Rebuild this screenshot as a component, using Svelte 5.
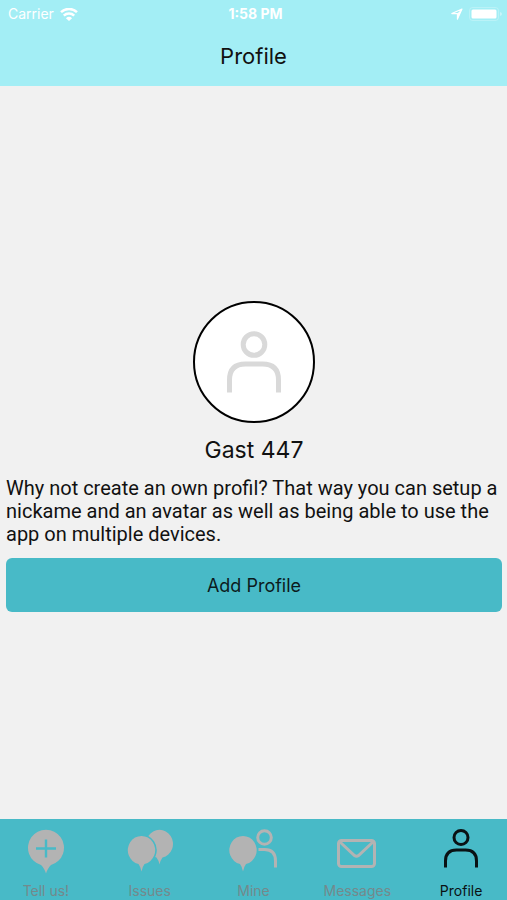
<script>
  const tabs = [
    { id: 'tell', label: 'Tell us!' },
    { id: 'issues', label: 'Issues' },
    { id: 'mine', label: 'Mine' },
    { id: 'messages', label: 'Messages' },
    { id: 'profile', label: 'Profile' }
  ];
  let active = $state('profile');
</script>

<div class="screen">
  <header>
    <div class="status">
      <div class="carrier">
        <span>Carrier</span>
        <svg width="18" height="13" viewBox="0 0 18 13" aria-hidden="true">
          <path d="M1 4.2a11.5 11.5 0 0 1 16 0M3.8 7.6a7.5 7.5 0 0 1 10.4 0" fill="none" stroke="#fff" stroke-width="2.5" />
          <path d="M9 13 5.9 10.2a4.5 4.5 0 0 1 6.2 0z" fill="#fff" />
        </svg>
      </div>
      <span class="time">1:58 PM</span>
      <div class="indicators">
        <svg width="12" height="12" viewBox="0 0 12 12" aria-hidden="true">
          <path d="M.8 5.6 11 1 6.4 11.2V5.6z" fill="none" stroke="#fff" stroke-width="1.1" stroke-linejoin="round" />
          <path d="M6.4 5.6 11 1 6.4 11.2z" fill="#fff" />
        </svg>
        <svg width="34" height="14" viewBox="0 0 34 14" aria-hidden="true">
          <rect x=".5" y=".5" width="29" height="13" rx="3" fill="none" stroke="#fff" stroke-opacity=".25" />
          <rect x="2.5" y="2.5" width="25" height="9" rx="1.5" fill="#fff" />
          <path d="M31 5v4q2-.6 2-2t-2-2" fill="#fff" fill-opacity=".4" />
        </svg>
      </div>
    </div>
    <h1>Profile</h1>
  </header>

  <main>
    <div class="avatar">
      <svg width="54" height="62" viewBox="0 0 54 62" aria-hidden="true">
        <g fill="none" stroke="#d9d9d9" stroke-width="5">
          <circle cx="27" cy="13.5" r="10.8" />
          <path d="M2.5 61.5V49Q2.5 33 18.5 33H35.5Q51.5 33 51.5 49V61.5" />
        </g>
      </svg>
    </div>
    <h2>Gast 447</h2>
    <p>Why not create an own profil? That way you can setup a nickame and an avatar as well as being able to use the app on multiple devices.</p>
    <button class="add" type="button">Add Profile</button>
  </main>

  <nav>
    {#each tabs as tab (tab.id)}
      <button type="button" class="tab" class:active={active === tab.id} onclick={() => (active = tab.id)}>
        <svg width="48" height="46" viewBox="0 0 48 46" aria-hidden="true">
          {#if tab.id === 'tell'}
            <path class="solid" d="M19 36A18 18 0 1 1 29 36Q26 38.5 24 44.5Q22 38.5 19 36z" />
            <path d="M24 10.5V28.5M14 19.5H34" stroke="#48bac7" stroke-width="2.4" />
          {:else if tab.id === 'issues'}
            <path class="solid" d="M30.5 28.5A13.5 14 0 1 1 36.5 28.5Q34.5 31 33.5 35.5Q32.5 31 30.5 28.5z" />
            <path class="solid" d="M12.5 35A13.7 14.2 0 1 1 18.5 35Q16.5 37.5 15.5 42.5Q14.5 37.5 12.5 35z" stroke="#48bac7" stroke-width="3" paint-order="stroke" />
          {:else if tab.id === 'mine'}
            <path class="solid" d="M11 35A13.7 14.2 0 1 1 17 35Q15 37.5 14 42.5Q13 37.5 11 35z" />
            <circle class="line" cx="35.5" cy="8.5" r="6.8" />
            <path class="line" d="M29.5 20.5H35.5Q46.5 20.5 46.5 32V38.5" />
          {:else if tab.id === 'messages'}
            <rect class="line" x="5.5" y="11.5" width="36" height="26" rx="3" />
            <path class="line" d="M7 13 21.5 26.5Q23.5 28 25.5 26.5L40 13" />
          {:else}
            <circle class="line" cx="24" cy="8.5" r="7" />
            <path class="line" d="M8.5 38.5V32Q8.500 21 19.500 21H28.500Q39.500 21 39.500 32V38.500" />
          {/if}
        </svg>
        <span>{tab.label}</span>
      </button>
    {/each}
  </nav>
</div>

<style>
  :global(body) {
    margin: 0;
  }
  .screen {
    display: flex;
    flex-direction: column;
    min-height: 100vh;
    background: #f1f1f1;
    color: #111;
    font-family: Inter, "Liberation Sans", sans-serif;
  }
  header {
    box-sizing: border-box;
    height: 86px;
    background: #a3eef5;
  }
  .status {
    display: grid;
    grid-template-columns: 1fr auto 1fr;
    align-items: center;
    height: 28px;
    padding: 0 4px 0 8px;
    color: #fff;
    font-size: 14px;
    line-height: 28px;
  }
  .carrier,
  .indicators {
    display: flex;
    align-items: center;
    gap: 6px;
  }
  .indicators {
    justify-content: flex-end;
  }
  .time {
    font-weight: 700;
  }
  h1,
  h2 {
    margin: 0;
    font-weight: 400;
    text-align: center;
  }
  h1 {
    font-size: 22px;
    line-height: 56px;
  }
  h2 {
    padding: 12px 0;
    font-size: 23px;
    line-height: 30px;
  }
  main {
    display: flex;
    flex: 1;
    flex-direction: column;
    justify-content: center;
    padding: 8px 5px 0 6px;
  }
  .avatar {
    display: flex;
    box-sizing: border-box;
    align-items: center;
    justify-content: center;
    align-self: center;
    width: 122px;
    height: 122px;
    border: 2px solid #000;
    border-radius: 50%;
    background: #fff;
  }
  p {
    margin: 0 0 12px;
    font-family: Roboto, "Liberation Sans", sans-serif;
    font-size: 20px;
    line-height: 23px;
  }
  button {
    border: 0;
    font-family: inherit;
    cursor: pointer;
  }
  .add {
    height: 54px;
    border-radius: 6px;
    background: #48bac7;
    color: #0c1b1d;
    font-size: 18px;
  }
  nav {
    display: grid;
    grid-template-columns: repeat(5, 1fr);
    column-gap: 12px;
    background: #48bac7;
  }
  .tab {
    display: flex;
    flex-direction: column;
    align-items: center;
    gap: 7px;
    min-width: 0;
    padding: 10px 0 0;
    background: none;
    color: #b3b3b3;
    font-size: 14px;
    line-height: 18px;
  }
  .tab span {
    color: #74898c;
  }
  .tab.active,
  .tab.active span {
    color: #0a1214;
  }
  .solid {
    fill: currentColor;
  }
  .line {
    fill: none;
    stroke: currentColor;
    stroke-width: 3;
  }
</style>
